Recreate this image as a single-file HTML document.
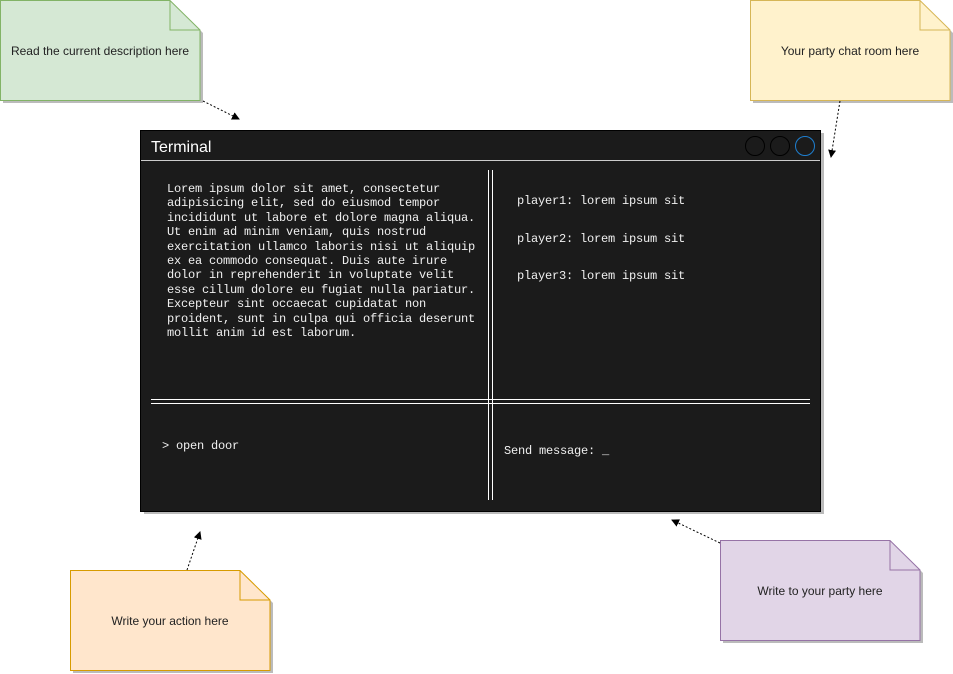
<!DOCTYPE html>
<html><head><style>
body{margin:0;width:953px;height:674px;background:#fff;position:relative;overflow:hidden;font-family:"Liberation Sans",sans-serif}
.t{position:absolute;font-family:"Liberation Mono",monospace;font-size:12px;letter-spacing:-0.2px;color:#f0f0f0;white-space:pre;line-height:14.4px}
.n{position:absolute;font-size:12px;color:#222;text-align:center}
</style></head><body>
<svg width="953" height="674" style="position:absolute;left:0;top:0">
<defs><marker id="a" markerWidth="8" markerHeight="8" refX="7" refY="4" orient="auto" markerUnits="userSpaceOnUse"><path d="M0,0 L8,4 L0,8 Z" fill="#000"/></marker></defs>
<g transform="translate(3,3)" fill="#bbb"><path d="M0,0H170L200,30V100H0Z"/><path d="M750,0H920L950,30V100H750Z"/><path d="M70,570H240L270,600V670H70Z"/><path d="M720,540H890L920,570V640H720Z"/></g>
<path d="M0.5,0.5H170L200,30V100.5H0.5Z" fill="#d5e8d4" stroke="#82b366"/><path d="M170,0.5V30H200" fill="none" stroke="#82b366"/>
<path d="M750.5,0.5H920L950,30V100.5H750.5Z" fill="#fff2cc" stroke="#d6b656"/><path d="M920,0.5V30H950" fill="none" stroke="#d6b656"/>
<path d="M70.5,570.5H240L270,600V670.5H70.5Z" fill="#ffe6cc" stroke="#d79b00"/><path d="M240,570.5V600H270" fill="none" stroke="#d79b00"/>
<path d="M720.5,540.5H890L920,570V640.5H720.5Z" fill="#e1d5e7" stroke="#9673a6"/><path d="M890,540.5V570H920" fill="none" stroke="#9673a6"/>
<rect x="144" y="133" width="680" height="381" fill="#bbb"/>
<rect x="140.5" y="130.5" width="680" height="381" fill="#1b1b1b" stroke="#000"/>
<line x1="141" y1="160.5" x2="820" y2="160.5" stroke="#ccc"/>
<circle cx="755" cy="146" r="9.5" fill="none" stroke="#000"/>
<circle cx="780" cy="146" r="9.5" fill="none" stroke="#000"/>
<circle cx="805" cy="146" r="9.5" fill="none" stroke="#1e7fd0"/>
<g stroke="#fff"><line x1="488.5" y1="170" x2="488.5" y2="500"/><line x1="492.5" y1="170" x2="492.5" y2="500"/>
<line x1="151" y1="399.5" x2="810" y2="399.5"/><line x1="151" y1="403.5" x2="810" y2="403.5"/></g>
<g stroke="#000" stroke-dasharray="2,2" fill="none" marker-end="url(#a)">
<line x1="203" y1="101" x2="239" y2="119"/>
<line x1="840" y1="101" x2="831" y2="157"/>
<line x1="187" y1="570" x2="200" y2="532"/>
<line x1="720" y1="543" x2="672" y2="520"/>
</g>
</svg>
<div style="position:absolute;left:151px;top:139px;color:#fff;font-size:16px">Terminal</div>
<div class="t" style="left:167px;top:182px">Lorem ipsum dolor sit amet, consectetur
adipisicing elit, sed do eiusmod tempor
incididunt ut labore et dolore magna aliqua.
Ut enim ad minim veniam, quis nostrud
exercitation ullamco laboris nisi ut aliquip
ex ea commodo consequat. Duis aute irure
dolor in reprehenderit in voluptate velit
esse cillum dolore eu fugiat nulla pariatur.
Excepteur sint occaecat cupidatat non
proident, sunt in culpa qui officia deserunt
mollit anim id est laborum.</div>
<div class="t" style="left:517px;top:194px">player1: lorem ipsum sit</div>
<div class="t" style="left:517px;top:232px">player2: lorem ipsum sit</div>
<div class="t" style="left:517px;top:269px">player3: lorem ipsum sit</div>
<div class="t" style="left:162px;top:439px">&gt; open door</div>
<div class="t" style="left:504px;top:444px">Send message: _</div>
<div class="n" style="left:0;top:44px;width:200px">Read the current description here</div>
<div class="n" style="left:750px;top:44px;width:200px">Your party chat room here</div>
<div class="n" style="left:70px;top:614px;width:200px">Write your action here</div>
<div class="n" style="left:720px;top:584px;width:200px">Write to your party here</div>
</body></html>
